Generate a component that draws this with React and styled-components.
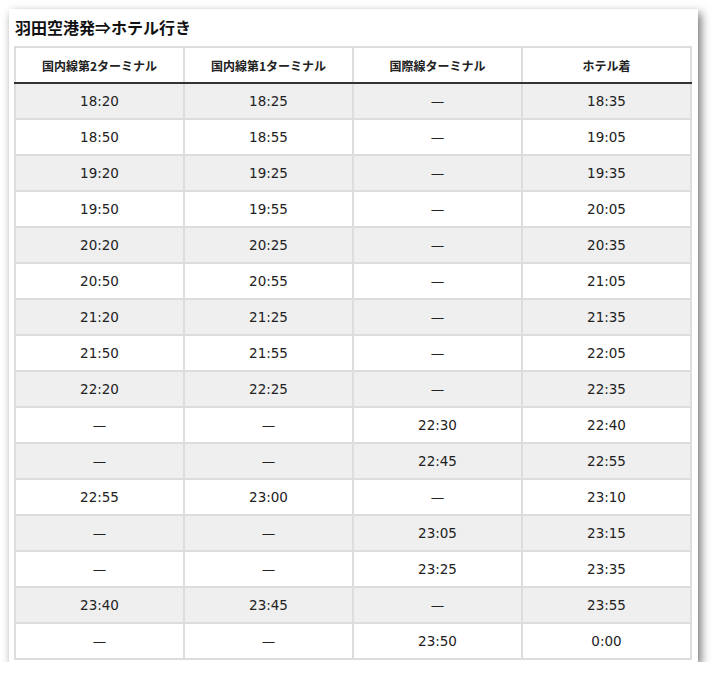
import React from 'react';
import styled, { createGlobalStyle } from 'styled-components';

const rows = [
  ['18:20', '18:25', '—', '18:35'],
  ['18:50', '18:55', '—', '19:05'],
  ['19:20', '19:25', '—', '19:35'],
  ['19:50', '19:55', '—', '20:05'],
  ['20:20', '20:25', '—', '20:35'],
  ['20:50', '20:55', '—', '21:05'],
  ['21:20', '21:25', '—', '21:35'],
  ['21:50', '21:55', '—', '22:05'],
  ['22:20', '22:25', '—', '22:35'],
  ['—', '—', '22:30', '22:40'],
  ['—', '—', '22:45', '22:55'],
  ['22:55', '23:00', '—', '23:10'],
  ['—', '—', '23:05', '23:15'],
  ['—', '—', '23:25', '23:35'],
  ['23:40', '23:45', '—', '23:55'],
  ['—', '—', '23:50', '0:00'],
];

const heads = ['国内線第2ターミナル', '国内線第1ターミナル', '国際線ターミナル', 'ホテル着'];

const GlobalStyle = createGlobalStyle`
  body {
    margin: 0;
    background: #fff;
    font-family: "DejaVu Sans", Verdana, "Noto Sans CJK JP", sans-serif;
    color: #222;
  }
`;

const Card = styled.div`
  margin: 9px 0 0 9px;
  width: 689px;
  box-sizing: border-box;
  background: #fff;
  padding: 7px 5px 2px 5px;
  box-shadow: 3px 4px 9px rgba(0, 0, 0, 0.55);
`;

const Title = styled.h2`
  margin: 0 0 8px 1px;
  font-family: "Noto Sans CJK JP", sans-serif;
  font-size: 16px;
  font-weight: 700;
  line-height: 22px;
  color: #111;
`;

const Table = styled.table`
  width: 678px;
  border-collapse: collapse;
  border: 2px solid #ddd;
  table-layout: fixed;
`;

const Th = styled.th`
  height: 34px;
  padding: 0;
  font-family: "Noto Sans CJK JP", sans-serif;
  font-size: 12px;
  font-weight: 700;
  color: #222;
  border: 2px solid #ddd;
  border-bottom: 2px solid #333;
  text-align: center;
`;

const Row = styled.tr`
  background: ${(p) => (p.$shaded ? '#efefef' : '#fff')};
`;

const Td = styled.td`
  height: 34px;
  padding: 0;
  font-size: 13.5px;
  color: #222;
  border: 2px solid #ddd;
  text-align: center;
`;

export default function App() {
  return (
    <>
      <GlobalStyle />
      <Card>
        <Title>羽田空港発⇒ホテル行き</Title>
        <Table>
          <thead>
            <tr>
              {heads.map((h) => (
                <Th key={h}>{h}</Th>
              ))}
            </tr>
          </thead>
          <tbody>
            {rows.map((r, i) => (
              <Row key={i} $shaded={i % 2 === 0}>
                {r.map((c, j) => (
                  <Td key={j}>{c}</Td>
                ))}
              </Row>
            ))}
          </tbody>
        </Table>
      </Card>
    </>
  );
}
